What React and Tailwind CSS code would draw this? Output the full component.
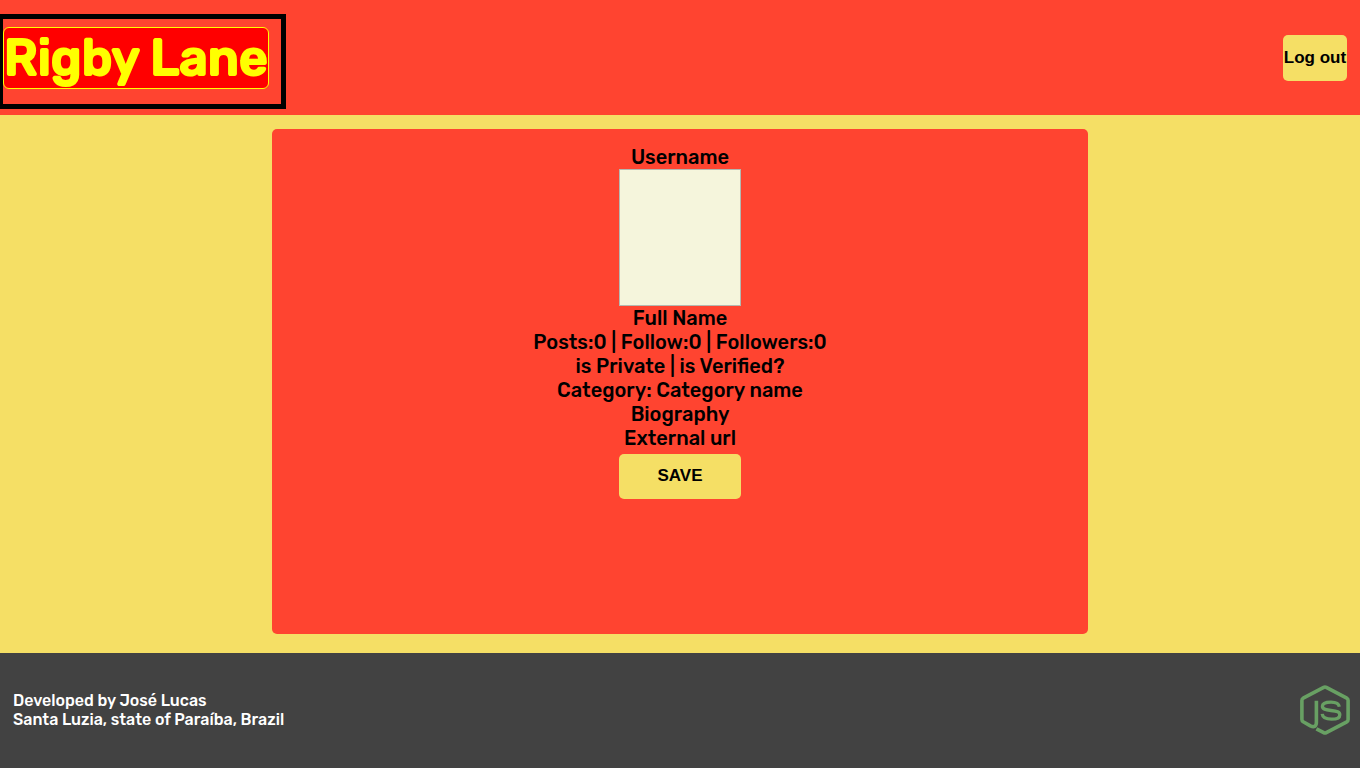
export default function App() {
  const details = [
    "Full Name",
    "Posts:0 | Follow:0 | Followers:0",
    "is Private | is Verified?",
    "Category: Category name",
    "Biography",
    "External url",
  ];

  return (
    <div className="flex min-h-screen flex-col bg-[#f5df65] font-['Rubik','Roboto',sans-serif] text-black">
      <header className="flex items-center justify-between bg-[#ff4430] pr-[13px]">
        <div className="mt-3.5 mb-1.5 border-y-[5px] border-r-[5px] border-l-[3px] border-black pt-2 pr-3 pb-[15px]">
          <h1 className="rounded-md border border-[#ffff00] bg-[#ff0000] text-[50px] leading-[60px] font-medium text-[#ffff00] [-webkit-text-stroke:2px_#ffff00]">
            Rigby Lane
          </h1>
        </div>
        <button
          type="button"
          className="h-[46px] w-16 rounded-[5px] bg-[#f5df65] font-['Liberation_Sans',sans-serif] text-[17px] font-bold whitespace-nowrap"
        >
          Log out
        </button>
      </header>

      <main className="flex flex-1 flex-col pt-3.5 pb-[19px]">
        <section className="mx-auto flex w-3/5 flex-1 flex-col items-center rounded-[5px] bg-[#ff4430] pt-4 text-center text-xl leading-6 font-medium">
          <h2>Username</h2>
          <div
            role="img"
            aria-label="Profile picture"
            className="h-[137px] w-[122px] border border-[#b4b8b0] bg-[#f5f5dc]"
          />
          {details.map((line) => (
            <p key={line}>{line}</p>
          ))}
          <button
            type="button"
            className="mt-1 h-[45px] w-[122px] rounded-[5px] bg-[#f5df65] pb-0.5 font-['Liberation_Sans',sans-serif] text-[17px] font-bold"
          >
            SAVE
          </button>
        </section>
      </main>

      <footer className="flex h-[115px] items-center justify-between bg-[#424242] pr-2.5 pb-0.5 pl-[13px] text-white">
        <address className="text-base leading-[19px] font-medium not-italic">
          Developed by José Lucas
          <br />
          Santa Luzia, state of Paraíba, Brazil
        </address>
        <svg
          viewBox="0 0 50 50"
          className="size-[50px]"
          fill="none"
          stroke="#68a063"
          strokeWidth="3.6"
          strokeLinejoin="round"
          role="img"
          aria-label="Node.js"
        >
          <path d="M16.4 15.8V37Q16.4 43.4 10.4 40.9L3.2 36.8Q1.9 36 1.9 34.5V15.5Q1.9 14 3.2 13.2L23.7 2.3Q25 1.6 26.3 2.3L46.8 13.2Q48.1 14 48.1 15.5V34.5Q48.1 36 46.8 36.8L26.3 47.7Q25 48.4 23.7 47.7L16.4 43.8" />
          <path
            strokeWidth="3.3"
            d="M39.3 21.7C38.8 18.3 36.5 17.1 31 17.1C25.6 17.1 22.4 18.4 22.4 21.3C22.4 24.4 25.4 24.9 31 25.5C37.2 26.2 39.8 26.9 39.8 29.9C39.8 32.9 36.8 34.1 31.600 34.1C25.600 34.1 22.600 32.800 22.200 28.800"
          />
        </svg>
      </footer>
    </div>
  );
}
